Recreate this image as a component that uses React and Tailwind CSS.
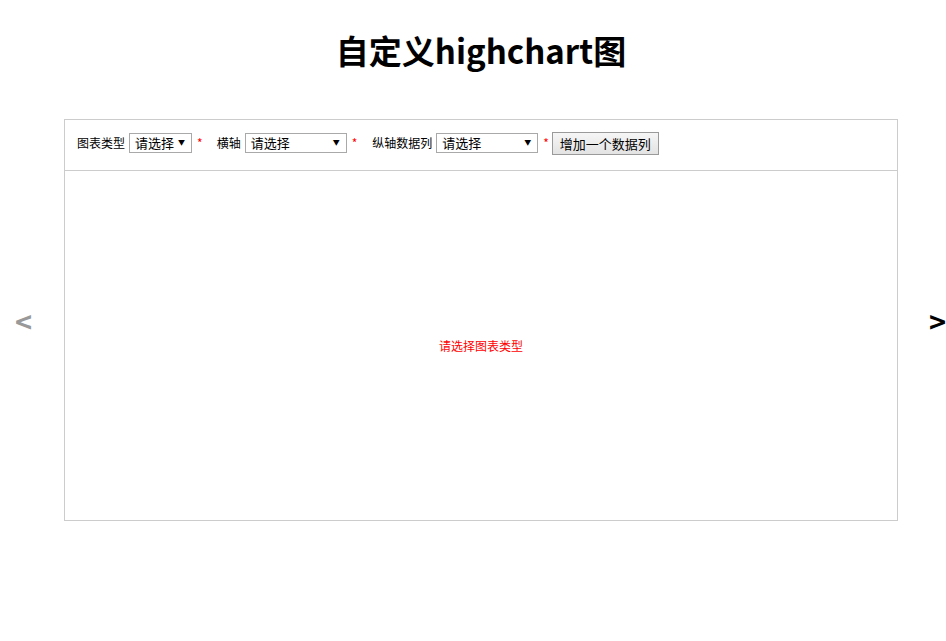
import React from "react";

const font = { fontFamily: '"Noto Sans CJK SC", "Noto Sans", sans-serif' };

function FakeSelect({ width }) {
  return (
    <div
      className="flex h-[20px] items-center justify-between border border-[#a9a9a9] bg-white pl-[5px] pr-[6px] text-[13px] leading-none text-black"
      style={{ width }}
    >
      <span>请选择</span>
      <span className="text-[7px] leading-none">▼</span>
    </div>
  );
}

function Star() {
  return <span className="ml-[5px] text-[12px] text-[#ff0000]">*</span>;
}

export default function App() {
  return (
    <div className="min-h-[641px] w-[946px] overflow-hidden bg-white text-black" style={font}>
      <h1 className="mt-[30px] h-[40px] pl-[16px] text-center text-[33px] font-bold leading-[40px]">自定义highchart图</h1>
      <div className="mt-[49px] flex items-center">
        <div className="flex w-[64px] shrink-0 items-center pl-[15px]">
          <span className="text-[29px] font-bold leading-none text-[#999999]">&lt;</span>
        </div>
        <div className="flex h-[402px] w-[834px] shrink-0 flex-col border border-[#cccccc]">
          <div className="flex h-[51px] shrink-0 items-center border-b border-[#cccccc] pb-[5px] pl-[12px] text-[12px]">
            <span>图表类型</span>
            <div className="ml-[4px]">
              <FakeSelect width={63} />
            </div>
            <Star />
            <span className="ml-[14px]">横轴</span>
            <div className="ml-[4px]">
              <FakeSelect width={102} />
            </div>
            <Star />
            <span className="ml-[15px]">纵轴数据列</span>
            <div className="ml-[4px]">
              <FakeSelect width={102} />
            </div>
            <Star />
            <button className="ml-[3px] mt-[2px] h-[23px] w-[107px] border border-[#9a9a9a] bg-gradient-to-b from-[#f6f6f6] to-[#e3e3e3] text-[13px] leading-none text-black">
              增加一个数据列
            </button>
          </div>
          <div className="flex flex-1 items-center justify-center text-[12px] text-[#ff0000]">请选择图表类型</div>
        </div>
        <div className="flex flex-1 items-center pl-[31px]">
          <span className="whitespace-nowrap text-[29px] font-bold leading-none text-black">&gt;</span>
        </div>
      </div>
    </div>
  );
}
